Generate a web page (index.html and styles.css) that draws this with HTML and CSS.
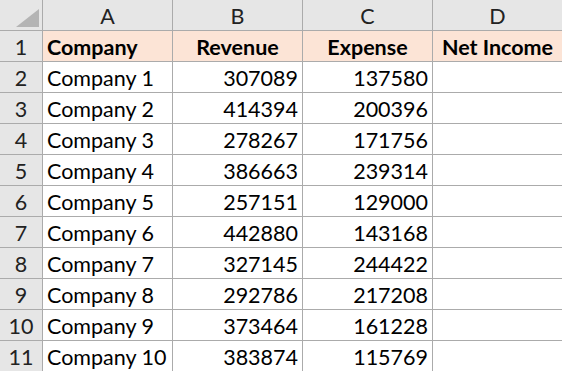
FILE: index.html
```html
<!DOCTYPE html>
<html>
<head>
    <meta charset="utf-8">
    <link rel="stylesheet" href="styles.css">
</head>
<body>
<div class="sheet">
    <div class="corner"><i class="corner_mark"></i></div>
    <div class="col_head">A</div>
    <div class="col_head">B</div>
    <div class="col_head">C</div>
    <div class="col_head">D</div>

    <div class="row_head">1</div>
    <div class="cell title left">Company</div>
    <div class="cell title center">Revenue</div>
    <div class="cell title center">Expense</div>
    <div class="cell title center">Net Income</div>

    <div class="row_head">2</div>
    <div class="cell">Company 1</div>
    <div class="cell num">307089</div>
    <div class="cell num">137580</div>
    <div class="cell"></div>

    <div class="row_head">3</div>
    <div class="cell">Company 2</div>
    <div class="cell num">414394</div>
    <div class="cell num">200396</div>
    <div class="cell"></div>

    <div class="row_head">4</div>
    <div class="cell">Company 3</div>
    <div class="cell num">278267</div>
    <div class="cell num">171756</div>
    <div class="cell"></div>

    <div class="row_head">5</div>
    <div class="cell">Company 4</div>
    <div class="cell num">386663</div>
    <div class="cell num">239314</div>
    <div class="cell"></div>

    <div class="row_head">6</div>
    <div class="cell">Company 5</div>
    <div class="cell num">257151</div>
    <div class="cell num">129000</div>
    <div class="cell"></div>

    <div class="row_head">7</div>
    <div class="cell">Company 6</div>
    <div class="cell num">442880</div>
    <div class="cell num">143168</div>
    <div class="cell"></div>

    <div class="row_head">8</div>
    <div class="cell">Company 7</div>
    <div class="cell num">327145</div>
    <div class="cell num">244422</div>
    <div class="cell"></div>

    <div class="row_head">9</div>
    <div class="cell">Company 8</div>
    <div class="cell num">292786</div>
    <div class="cell num">217208</div>
    <div class="cell"></div>

    <div class="row_head">10</div>
    <div class="cell">Company 9</div>
    <div class="cell num">373464</div>
    <div class="cell num">161228</div>
    <div class="cell"></div>

    <div class="row_head">11</div>
    <div class="cell">Company 10</div>
    <div class="cell num">383874</div>
    <div class="cell num">115769</div>
    <div class="cell"></div>
</div>
</body>
</html>
```

FILE: styles.css
```css
html, body {
    margin: 0;
    padding: 0;
    background: #fff;
}

.sheet {
    display: grid;
    grid-template-columns: 42px 129px 129px 129px 1fr;
    grid-auto-rows: 30px;
    gap: 1px;
    background: #ababab;
    font-family: Lato, "Open Sans", sans-serif;
    font-size: 21.5px;
    color: #000;
}

.corner {
    position: relative;
    background: #e6e6e6;
}

.corner .corner_mark {
    position: absolute;
    left: 16px;
    top: 9px;
    width: 23px;
    height: 18px;
    background: #b4b4b4;
    clip-path: polygon(100% 0, 100% 100%, 0 100%);
}

.col_head,
.row_head {
    display: flex;
    align-items: center;
    justify-content: center;
    padding-top: 1px;
    background: #e6e6e6;
    color: #222;
}

.cell {
    display: flex;
    align-items: center;
    padding: 2px 4px 0;
    background: #fff;
    white-space: nowrap;
}

.cell.title {
    background: #fce4d6;
    font-weight: bold;
}

.cell.center {
    justify-content: center;
}

.cell.num {
    justify-content: flex-end;
}
```
